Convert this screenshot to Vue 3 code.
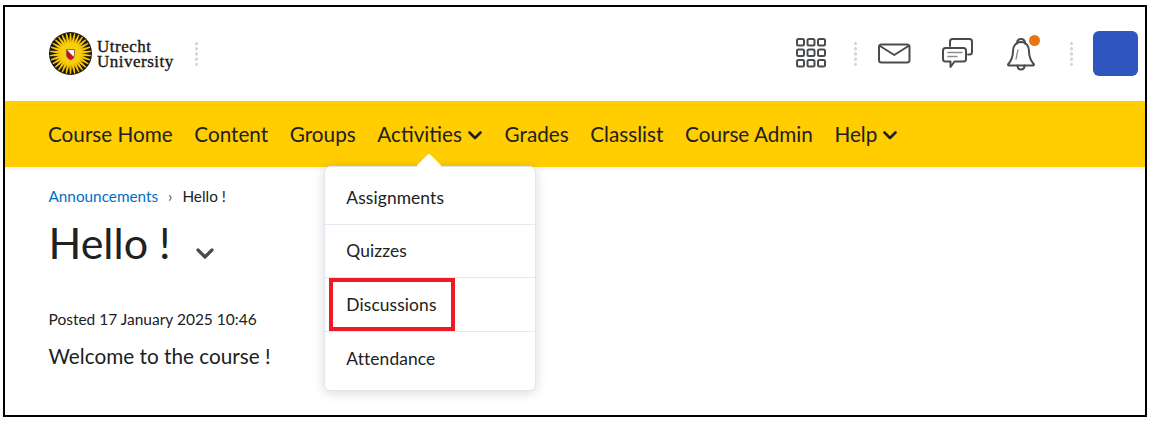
<script setup>
const navItems = [
  { name: 'Course Home' },
  { name: 'Content' },
  { name: 'Groups' },
  { name: 'Activities', menu: true, open: true },
  { name: 'Grades' },
  { name: 'Classlist' },
  { name: 'Course Admin' },
  { name: 'Help', menu: true }
]

const menuItems = ['Assignments', 'Quizzes', 'Discussions', 'Attendance']

// sunburst rays of the logo
const rays = Array.from({ length: 30 }, (_, i) => i * 12)
</script>

<template>
  <main class="frame">
    <header class="topbar">
      <div class="brand">
        <svg class="logo" viewBox="0 0 44 44" width="43" height="43">
          <circle cx="22" cy="22" r="22" fill="#1b1712" />
          <polygon
            v-for="r in rays"
            :key="r"
            points="21.4,1 22.6,1 23.600,12 20.400,12"
            fill="#f7c600"
            :transform="`rotate(${r} 22 22)`"
          />
          <circle cx="22" cy="22" r="11" fill="#f9cf0c" />
          <path d="M18 18h8v5c0 3-2 4.500-4 5.500-2-1-4-2.500-4-5.500z" fill="#fff" stroke="#222" stroke-width="0.6" />
          <path d="M18 18l8 8c-1 1-2.500 2-4 2.500-2-1-4-2.500-4-5.500z" fill="#c8102e" />
        </svg>
        <div class="wordmark">Utrecht<br>University</div>
        <span class="dots"></span>
      </div>

      <div class="tools">
        <svg class="tool grid-icon" viewBox="0 0 32 32" width="32" height="32" fill="none" stroke="#494c4e" stroke-width="2">
          <rect x="2" y="2" width="7" height="6.500" rx="1.500" />
          <rect x="12.500" y="2" width="7" height="6.500" rx="1.500" />
          <rect x="23" y="2" width="7" height="6.500" rx="1.500" />
          <rect x="2" y="12.500" width="7" height="6.500" rx="1.500" />
          <rect x="12.500" y="12.500" width="7" height="6.500" rx="1.500" />
          <rect x="23" y="12.500" width="7" height="6.500" rx="1.500" />
          <rect x="2" y="23" width="7" height="6.500" rx="1.500" />
          <rect x="12.500" y="23" width="7" height="6.500" rx="1.500" />
          <rect x="23" y="23" width="7" height="6.500" rx="1.500" />
        </svg>
        <span class="dots"></span>
        <svg class="tool mail-icon" viewBox="0 0 34 22" width="34" height="22" fill="none" stroke="#494c4e" stroke-width="2" stroke-linejoin="round">
          <rect x="1" y="1.500" width="30.500" height="18" rx="2.500" />
          <path d="M2 3l14.250 9L30.500 3" stroke-linecap="round" />
        </svg>
        <svg class="tool chat-icon" viewBox="0 0 34 34" width="34" height="34" fill="none" stroke="#494c4e" stroke-width="2" stroke-linejoin="round" stroke-linecap="round">
          <path d="M9 9V4.500C9 3 10 2 11.500 2h17C30 2 31 3 31 4.500V15c0 1.500-1 2.500-2.500 2.500H27" />
          <path d="M4.500 11h18c1.500 0 2.500 1 2.500 2.500V22c0 1.500-1 2.500-2.500 2.500H13.500L9.500 30v-5.500h-5C3 24.500 2 23.500 2 22v-8.500C2 12 3 11 4.500 11z" />
          <path d="M7 15.500h14M7 19.500h9" stroke="#8a8d8f" stroke-width="1.600" />
        </svg>
        <div class="bell-wrap">
          <svg class="tool bell-icon" viewBox="0 0 30 34" width="30" height="34" fill="none" stroke="#494c4e" stroke-width="2" stroke-linejoin="round" stroke-linecap="round">
            <path d="M11 6.500C11 3 13 2 15 2s4 1 4 4.500" />
            <path d="M15 5c-5 0-8 4-8 9 0 6-1 9-5 13.500c0 .800 .500 1 1 1h24c.500 0 1-.200 1-1C24 23 23 20 23 14c0-5-3-9-8-9z" />
            <path d="M11.500 28.500c0 3 1.500 4 3.500 4s3.500-1 3.500-4" />
            <path d="M12 13c-1 3 -1 6-2 9" stroke="#8a8d8f" stroke-width="1.400" />
          </svg>
          <span class="badge"></span>
        </div>
        <span class="dots"></span>
        <div class="avatar"></div>
      </div>
    </header>

    <nav class="navbar">
      <div v-for="item in navItems" :key="item.name" class="nav-item">
        <span>{{ item.name }}</span>
        <svg v-if="item.menu" class="chev" viewBox="0 0 14 9" width="14" height="9" fill="none" stroke="#202122" stroke-width="2.600" stroke-linecap="round" stroke-linejoin="round">
          <path d="M1.500 1.500L7 7l5.500-5.500" />
        </svg>

        <div v-if="item.open" class="dropdown">
          <span class="pointer"></span>
          <div v-for="entry in menuItems" :key="entry" class="dropdown-row">
            {{ entry }}
            <span v-if="entry === 'Discussions'" class="highlight"></span>
          </div>
        </div>
      </div>
    </nav>

    <section class="content">
      <div class="crumbs">
        <a class="crumb-link">Announcements</a>
        <span class="crumb-sep">›</span>
        <span>Hello !</span>
      </div>
      <div class="title-row">
        <h1>Hello !</h1>
        <svg viewBox="0 0 18 12" width="18" height="12" fill="none" stroke="#494c4e" stroke-width="3.200" stroke-linecap="round" stroke-linejoin="round">
          <path d="M2 2l7 7 7-7" />
        </svg>
      </div>
      <p class="posted">Posted 17 January 2025 10:46</p>
      <p class="message">Welcome to the course !</p>
    </section>
  </main>
</template>

<style>
html, body {
  margin: 0;
  background: #fff;
}
</style>

<style scoped>
.frame {
  box-sizing: border-box;
  width: 1144px;
  height: 412px;
  margin: 5px 0 0 3px;
  border: 2px solid #000;
  background: #fff;
  font-family: Lato, "Liberation Sans", sans-serif;
  color: #202122;
  overflow: hidden;
}

.topbar {
  height: 94px;
  padding: 0 7px 0 44px;
  display: flex;
  align-items: center;
  justify-content: space-between;
}

.brand {
  display: flex;
  align-items: center;
  margin-top: -1px;
}

.logo {
  display: block;
}

.wordmark {
  margin-left: 5px;
  margin-top: 2px;
  font-family: "Liberation Serif", serif;
  font-size: 17px;
  line-height: 14.500px;
  letter-spacing: 0.5px;
  -webkit-text-stroke: 0.35px #1b1712;
  color: #1b1712;
}

.brand .dots {
  margin-left: 21px;
}

.dots {
  width: 3px;
  height: 26px;
  background: radial-gradient(circle, #cdd7e0 1.500px, transparent 1.700px) 0 0 / 3px 5.200px repeat-y;
}

.tools {
  display: flex;
  align-items: center;
}

.tool {
  display: block;
}

.grid-icon {
  margin-right: 26.500px;
  margin-top: -2px;
}

.mail-icon {
  margin-left: 21.500px;
}

.chat-icon {
  margin-left: 29px;
}

.bell-wrap {
  position: relative;
  margin-left: 31px;
}

.badge {
  position: absolute;
  top: -2px;
  right: -4px;
  width: 11px;
  height: 11px;
  border-radius: 50%;
  background: #e87511;
}

.bell-wrap + .dots {
  margin-left: 34px;
}

.avatar {
  width: 45px;
  height: 45px;
  margin-left: 20px;
  margin-top: -2px;
  border-radius: 6px;
  background: #2f55bf;
}

.navbar {
  height: 66px;
  padding-left: 43px;
  display: flex;
  align-items: center;
  gap: 21.650px;
  background: #ffcd00;
  font-size: 20.700px;
  box-shadow: 0 2px 4px rgba(0, 0, 0, 0.06);
  position: relative;
}

.nav-item {
  position: relative;
  display: flex;
  align-items: center;
  gap: 6px;
}

.chev {
  margin-top: 3px;
  margin-right: 1px;
}

.dropdown {
  position: absolute;
  left: -53px;
  top: 44px;
  z-index: 5;
  box-sizing: border-box;
  width: 212px;
  height: 225px;
  padding: 4px 0;
  background: #fff;
  border: 1px solid #dfe6ef;
  border-radius: 6px;
  box-shadow: 0 2px 12px rgba(0, 0, 0, 0.15);
  font-size: 17.400px;
}

.pointer {
  position: absolute;
  left: 95px;
  top: -10px;
  width: 18px;
  height: 18px;
  background: #fff;
  transform: rotate(45deg);
  border-radius: 2px;
}

.dropdown-row {
  position: relative;
  height: 53.500px;
  box-sizing: border-box;
  padding-left: 21px;
  display: flex;
  align-items: center;
  border-bottom: 1px solid #e3e9f1;
  letter-spacing: 0.1px;
}

.dropdown-row:last-child {
  border-bottom: none;
}

.highlight {
  position: absolute;
  left: 4px;
  top: 0;
  width: 126px;
  height: 53px;
  box-sizing: border-box;
  border: 4.500px solid #ed1c24;
}

.content {
  padding: 19px 0 0 43.500px;
}

.crumbs {
  display: flex;
  align-items: center;
  font-size: 15.300px;
  line-height: 20px;
}

.crumb-link {
  color: #006fbf;
}

.crumb-sep {
  margin: 0 10px;
  color: #494c4e;
}

.title-row {
  display: flex;
  align-items: center;
  gap: 25px;
  margin-top: 9px;
}

.title-row h1 {
  margin: 0;
  font-size: 43px;
  line-height: 56px;
  font-weight: 400;
}

.title-row svg {
  margin-top: 21px;
}

.posted {
  margin: 38px 0 0;
  font-size: 15.500px;
  line-height: 20px;
}

.message {
  margin: 13.500px 0 0;
  font-size: 20.750px;
  line-height: 26px;
}
</style>
